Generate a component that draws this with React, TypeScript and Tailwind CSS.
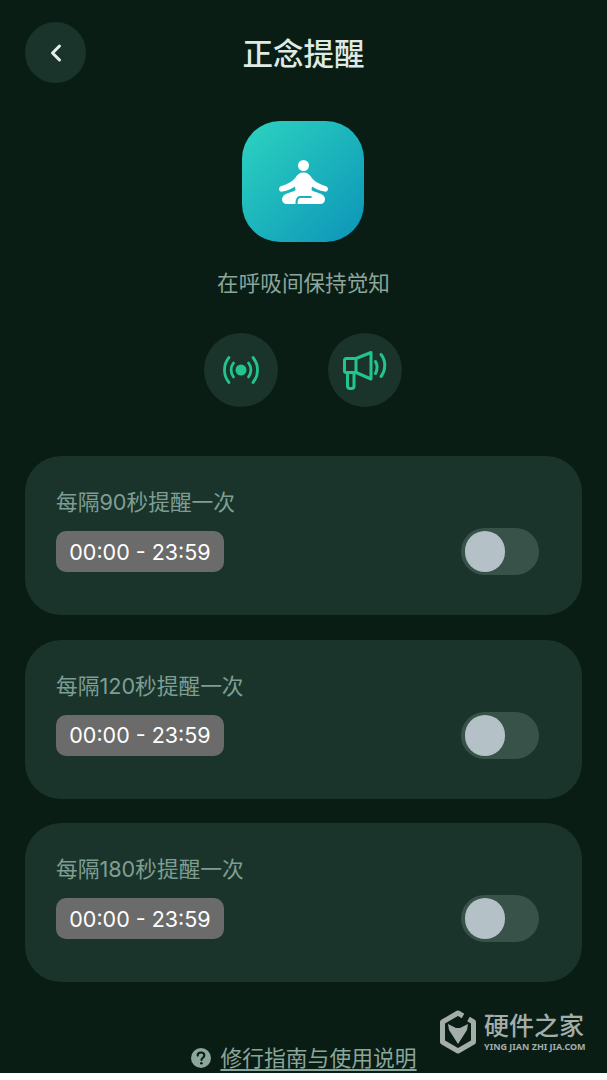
import React from 'react';
import { ChevronLeft } from 'lucide-react';

const FONT = { fontFamily: 'Inter, "Noto Sans CJK SC", sans-serif' };

const reminders = ['每隔90秒提醒一次', '每隔120秒提醒一次', '每隔180秒提醒一次'];

function ReminderCard({ label }: { label: string }) {
  return (
    <div className="flex h-[159px] items-start justify-between rounded-[36px] bg-[#1a342b] pl-[31px] pr-[43px] pt-[30px]">
      <div className="flex flex-col items-start">
        <div className="h-[32px] text-[21.7px] leading-[32px] text-[#7f9e93]">{label}</div>
        <div className="mt-[13px] flex h-[41px] w-[168px] items-center justify-center rounded-[10px] bg-[#6b6b6b] pt-[1px] text-[21.5px] text-white">
          00:00 - 23:59
        </div>
      </div>
      <div className="mt-[42px] flex h-[47px] w-[78px] items-center rounded-full bg-[#38524a] pl-[4px]">
        <div className="h-[41px] w-[40px] rounded-full bg-[#b4c2c8]" />
      </div>
    </div>
  );
}

export default function App() {
  return (
    <div className="h-[1080px] w-[607px] overflow-hidden bg-white" style={FONT}>
      <div className="relative flex h-[1073px] flex-col bg-[#0a1d15] px-[25px]">
        <header className="relative mt-[22px] flex h-[61px] shrink-0 items-center justify-center">
          <button className="absolute left-0 top-0 flex h-[61px] w-[61px] items-center justify-center rounded-full bg-[#1a342b] text-[#e6eeea]">
            <ChevronLeft size={28} strokeWidth={2.6} />
          </button>
          <h1 className="pt-[2px] text-[30.5px] font-medium text-[#dfeae4]">正念提醒</h1>
        </header>

        <div className="mr-[1px] mt-[38px] flex h-[121px] w-[122px] shrink-0 items-center justify-center self-center rounded-[38px] bg-gradient-to-br from-[#2dd4bf] to-[#0e94b8]">
          <svg width="49" height="44" viewBox="0 0 49 44" fill="#fff">
            <circle cx="24.500" cy="5.500" r="5.500" />
            <path d="M24.500 12.500c-4 0-6 2-8 5-2.500 3.500-7 6.500-14 8.500C.8 26.500 0 27.800 0 29c0 1.800 1.500 3 3.500 2.600 5-1 9.500-3 12.500-5.100l.5 3.500c-.5 1.500-7 2.500-10.500 4.500-2 1.200-3 3-3 5 0 2.600 2 4.500 5 4.500h33c3 0 5-1.900 5-4.500 0-2-1-3.800-3-5-3.500-2-10-3-10.500-4.500l.5-3.500c3 2.100 7.500 4.100 12.500 5.100 2 .4 3.500-.8 3.500-2.600 0-1.200-.8-2.500-2.500-3-7-2-11.500-5-14-8.500-2-3-4-5-8-5z" />
            <path d="M17.500 44c0-3.500.5-7 3.500-7h11.500" fill="none" stroke="#1cb0b8" strokeWidth="2" />
          </svg>
        </div>

        <p className="mt-[25px] shrink-0 text-center text-[21.6px] leading-[32px] text-[#8ba69b]">在呼吸间保持觉知</p>

        <div className="mt-[34px] flex shrink-0 justify-center gap-[50px] pr-[1px]">
          <div className="flex h-[74px] w-[74px] items-center justify-center rounded-full bg-[#1a342b]">
            <svg width="38" height="30" viewBox="0 0 38 30" fill="none" stroke="#22c58b" strokeWidth="2.800" strokeLinecap="round">
              <circle cx="19" cy="15" r="5.500" fill="#22c58b" stroke="none" />
              <path d="M11.500 8c-3.200 4-3.200 10 0 14" />
              <path d="M26.500 8c3.200 4 3.200 10 0 14" />
              <path d="M7 2.500c-6 7-6 18 0 25" />
              <path d="M31 2.500c6 7 6 18 0 25" />
            </svg>
          </div>
          <div className="flex h-[74px] w-[74px] items-center justify-center rounded-full bg-[#1a342b]">
            <svg width="44" height="40" viewBox="0 0 44 40" fill="none" stroke="#22c58b" strokeWidth="3" strokeLinecap="round" strokeLinejoin="round">
              <path d="M13 8.500l15-6v26.500l-15-6.500H3a1.500 1.500 0 0 1-1.500-1.500V10a1.500 1.500 0 0 1 1.500-1.500z" />
              <path d="M13 8.500v14" />
              <path d="M4.500 22.500V36a2.500 2.500 0 0 0 2.500 2.500h1.500A2.500 2.500 0 0 0 11 36V22.500" />
              <path d="M32.500 11.500c2 3.500 2 8 0 12" />
              <path d="M38 4.500c5 6 5 15.500 0 22" />
            </svg>
          </div>
        </div>

        <div className="mt-[49px] flex shrink-0 flex-col gap-[24.5px]">
          {reminders.map((label) => (
            <ReminderCard key={label} label={label} />
          ))}
        </div>

        <div className="mt-[61px] flex shrink-0 items-center justify-center gap-[9px] pl-[1px]">
          <svg width="20" height="20" viewBox="0 0 21 21">
            <circle cx="10.500" cy="10.500" r="10.500" fill="#8ba69b" />
            <path d="M7 8c0-2 1.500-3.300 3.500-3.300S14 6 14 7.800c0 2.400-3 2.500-3 4.700" fill="none" stroke="#0a1d15" strokeWidth="2.200" strokeLinecap="round" />
            <circle cx="10.900" cy="16" r="1.400" fill="#0a1d15" />
          </svg>
          <span className="text-[21.800px] leading-[30px] text-[#8ba69b] underline underline-offset-[3px]">修行指南与使用说明</span>
        </div>

        <div className="pointer-events-none absolute left-[439px] top-[1010px] flex items-center gap-[7px]">
          <svg width="38" height="44" viewBox="0 0 38 44">
            <path d="M24 6L19 3 3.500 12v20L19 41l15.500-9V12L29.500 9" fill="none" stroke="#a3aeaa" strokeWidth="5" strokeLinejoin="round" />
            <path d="M9 14l8 4h4l8-4-1 6-9 14-9-14z" fill="#a3aeaa" />
          </svg>
          <div className="flex flex-col text-[#a3aeaa]">
            <span className="h-[30px] text-[25px] font-medium leading-[30px]">硬件之家</span>
            <span className="h-[12px] whitespace-nowrap text-[9px] font-bold leading-[12px]" style={{ fontFamily: '"Noto Sans", sans-serif' }}>
              YING JIAN ZHI JIA.COM
            </span>
          </div>
        </div>
      </div>
    </div>
  );
}
